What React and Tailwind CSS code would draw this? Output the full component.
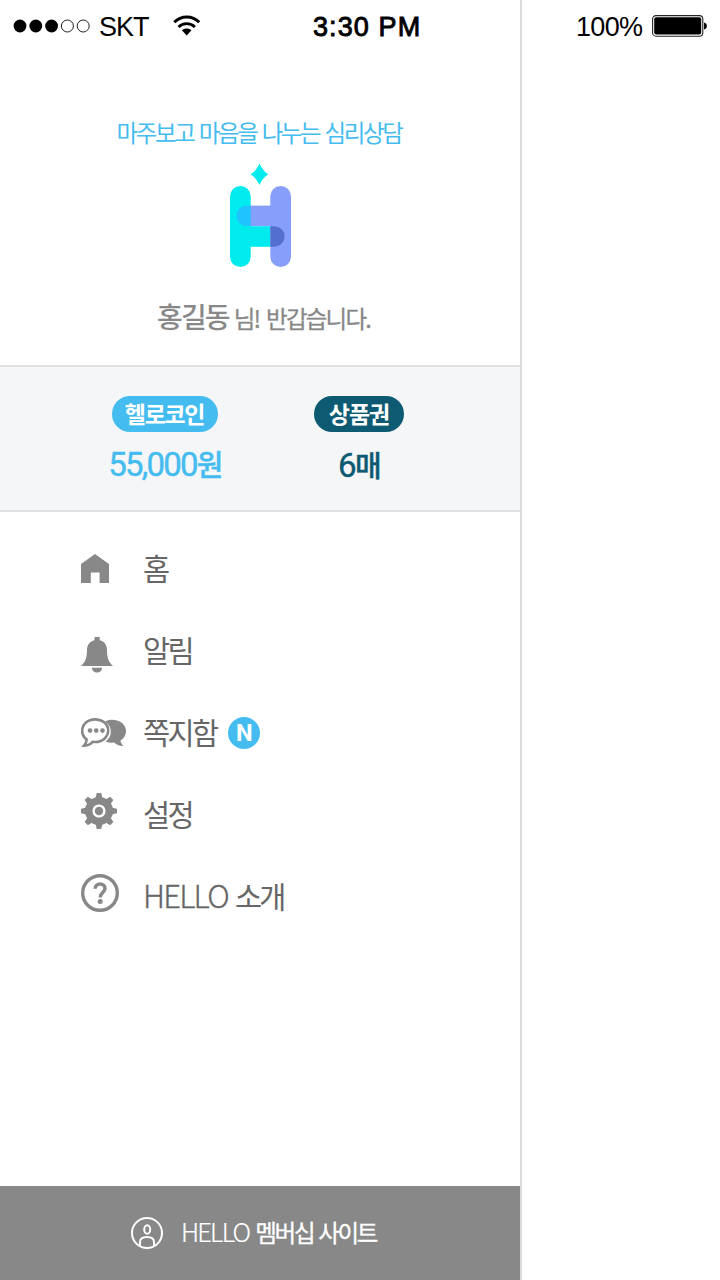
const KR = "font-['Noto_Sans_CJK_KR',sans-serif]";

function SignalDots() {
  return (
    <svg className="h-[14px] w-[78px]" viewBox="0 0 78 14">
      <circle cx="7" cy="7" r="6.4" fill="#000" />
      <circle cx="22.8" cy="7" r="6.4" fill="#000" />
      <circle cx="38.6" cy="7" r="6.4" fill="#000" />
      <circle cx="54.4" cy="7" r="6" fill="none" stroke="#222" strokeWidth="1" />
      <circle cx="70.2" cy="7" r="6" fill="none" stroke="#222" strokeWidth="1" />
    </svg>
  );
}

function Wifi() {
  return (
    <svg className="h-[22px] w-[28px]" viewBox="0 0 28 22" fill="none" stroke="#000">
      <path d="M1.3 7.2C8.2 0.1 19.3 0.1 26.2 7.2" strokeWidth="3" />
      <path d="M5.5 12C10.2 7.5 17.2 7.5 21.9 12" strokeWidth="2.8" />
      <path d="M8.9 15.3C11.8 12.9 15.6 12.9 18.5 15.3L13.7 20.5Z" fill="#000" stroke="none" />
    </svg>
  );
}

function Battery() {
  return (
    <svg className="h-[22px] w-[56px]" viewBox="0 0 56 22">
      <rect x="0.6" y="0.6" width="50.2" height="20.6" rx="3.4" fill="#fff" stroke="#222" strokeWidth="1.1" />
      <rect x="2.2" y="2.2" width="47" height="17.4" rx="2" fill="#000" />
      <path d="M52 7.5C55.8 8 55.8 14 52 14.5Z" fill="#000" />
    </svg>
  );
}

function Logo() {
  return (
    <svg className="h-[104px] w-[62px]" viewBox="0 0 62 104">
      <path d="M29.5 -0.5C31.8 4.5 34.5 8 38.2 10.3C34.5 12.7 31.8 16 29.5 21C27.2 16 24.5 12.7 20.6 10.3C24.5 8 27.2 4.5 29.5 -0.5Z" fill="#00ebee" />
      <rect x="0" y="22" width="20.7" height="81" rx="10.3" fill="#00ebee" />
      <rect x="40.3" y="22" width="20.7" height="81" rx="10.3" fill="#889efb" />
      <rect x="20" y="41.6" width="22" height="20.6" fill="#889efb" />
      <path d="M20.7 41.6H16.8A10.3 10.3 0 0 0 16.8 62.2H20.7Z" fill="#1fc3ff" />
      <rect x="20" y="62.2" width="20.4" height="20.6" fill="#00ebee" />
      <path d="M40.3 62.2H44.3A10.3 10.3 0 0 1 44.3 82.8H40.3Z" fill="#5370d0" />
    </svg>
  );
}

function HomeIcon() {
  return (
    <svg className="relative -top-px h-[29px] w-[28px]" viewBox="0 0 28 29" fill="#888">
      <path d="M14 0L28 10V29H18.6V18.4H9.8V29H0V10Z" />
    </svg>
  );
}

function BellIcon() {
  return (
    <svg className="mt-2 h-[36px] w-[32px]" viewBox="0 0 32 36" fill="#888">
      <path d="M13.5 0H18.7V3.2C23.5 4.4 26 8 26 13C26 20.5 27.5 25 32 28.9H0C4.5 25 6 20.5 6 13C6 8 8.7 4.4 13.5 3.2Z" />
      <path d="M11 30.8H21C21 37.2 11 37.2 11 30.8Z" />
    </svg>
  );
}

function ChatIcon() {
  return (
    <svg className="h-[30px] w-[46px]" viewBox="0 0 46 30">
      <path d="M30 1.8C39 1.4 45 6.5 45 13.2C45 17 43 20.5 39.5 22.5C39.7 24.5 40.8 26.2 42.4 28C38.5 28.2 35.5 26.7 33 24.6C30 24.8 27 24.4 24.5 23.4C31.5 19 32 8 24 3.4C26 2.5 28 1.9 30 1.8Z" fill="#888" />
      <path d="M14.2 1.400C21.5 1.400 27.2 6.2 27.2 12.6C27.2 19 21.5 24 14.2 24C13.2 24 12.4 23.900 11.7 23.8C9.5 26.5 6.5 27.900 3 27.7C5 25.8 5.7 24 5.6 21.4C2.7 19.5 1.2 16.3 1.2 12.6C1.2 6.2 6.8 1.400 14.2 1.400Z" fill="#fff" stroke="#888" strokeWidth="2.6" />
      <circle cx="9" cy="12.6" r="2.3" fill="#888" />
      <circle cx="15.2" cy="12.6" r="2.3" fill="#888" />
      <circle cx="21.5" cy="12.6" r="2.3" fill="#888" />
    </svg>
  );
}

function GearIcon() {
  return (
    <svg className="relative -top-1 h-[36px] w-[36px]" viewBox="-18 -18 36 36" fill="#888">
      <circle r="14" />
      {[0, 45, 90, 135, 180, 225, 270, 315].map((a) => (
        <path key={a} transform={`rotate(${a})`} d="M-2.300 -18H2.300L3.600 -12H-3.600Z" />
      ))}
      <circle r="5.4" fill="none" stroke="#fff" strokeWidth="2.4" />
    </svg>
  );
}

function HelpIcon() {
  return (
    <svg className="relative -top-1 h-[38px] w-[38px]" viewBox="0 0 38 38" fill="none" stroke="#888">
      <circle cx="19" cy="19" r="17.3" strokeWidth="3.4" />
      <path d="M14.2 14.7C14.3 8.4 24 8.3 24 14.5C24 18.6 19.2 18.6 19.2 23.4" strokeWidth="3.5" />
      <circle cx="19.2" cy="27.6" r="2.500" fill="#888" stroke="none" />
    </svg>
  );
}

function MemberIcon() {
  return (
    <svg className="h-[32px] w-[32px]" viewBox="0 0 32 32" fill="none" stroke="#fff" strokeWidth="2">
      <circle cx="16" cy="16" r="15" />
      <ellipse cx="16.2" cy="12.5" rx="3" ry="4.2" />
      <path d="M9 29V25C9 21 11.5 20 16 20C20.5 20 23 21 23 25V29" />
    </svg>
  );
}

const menu = [
  { label: "홈", Icon: HomeIcon },
  { label: "알림", Icon: BellIcon },
  { label: "쪽지함", Icon: ChatIcon, isNew: true },
  { label: "설정", Icon: GearIcon },
  { latin: "HELLO", label: "소개", Icon: HelpIcon },
];

export default function App() {
  return (
    <div className={`flex h-[1280px] w-[720px] overflow-hidden bg-white ${KR}`}>
      <aside className="flex w-[522px] shrink-0 flex-col border-r-2 border-[#dcdcdc]">
        <header className="flex h-[52px] shrink-0 items-center pl-[13px] font-['Liberation_Sans',sans-serif] text-[27px] text-black">
          <SignalDots />
          <span className="ml-[8px] w-[74px] pt-[3px] tracking-[-1px]">SKT</span>
          <Wifi />
          <span className="ml-[112px] whitespace-nowrap pt-[3px] tracking-[1.1px] [-webkit-text-stroke:0.9px_#000]">3:30 PM</span>
        </header>

        <section className="flex h-[313px] shrink-0 flex-col items-center">
          <p className="mt-[62px] h-[36px] whitespace-nowrap pr-[2px] text-[23.5px] leading-[36px] tracking-[-2.4px] [word-spacing:2.4px] text-[#45bcef]">
            마주보고 마음을 나누는 심리상담
          </p>
          <div className="mt-[14px] h-[104px] pl-px">
            <Logo />
          </div>
          <p className="mt-[28px] flex h-[40px] items-baseline whitespace-nowrap pl-[7px] leading-[40px] text-[#888]">
            <b className="mr-[5px] text-[28px] font-medium tracking-[-1.9px]">홍길동</b>
            <span className="text-[23.5px] tracking-[-1.8px] [word-spacing:3.4px] [-webkit-text-stroke:0.3px_#888]">님! 반갑습니다.</span>
          </p>
        </section>

        <section className="flex h-[147px] shrink-0 border-y-2 border-[#e0e0e0] bg-[#f4f6f8]">
          <div className="ml-[92px] flex w-[146px] flex-col items-center pt-[29px]">
            <span className="flex h-[36px] w-[106px] items-center justify-center rounded-full bg-[#45bcef] pr-px pb-[2px] text-[23px] leading-[34px] font-bold tracking-[-1.3px] text-white">
              헬로코인
            </span>
            <strong className="mt-[11px] h-[44px] whitespace-nowrap font-['Roboto','Noto_Sans_CJK_KR',sans-serif] text-[33px] leading-[44px] font-normal tracking-[-1.8px] text-[#45bcef] [-webkit-text-stroke:0.4px_#45bcef]">
              55,000<span className="text-[29px] font-medium">원</span>
            </strong>
          </div>
          <div className="ml-[56px] flex w-[130px] flex-col items-center pt-[29px]">
            <span className="flex h-[36px] w-[90px] items-center justify-center rounded-full bg-[#0e5a72] pb-[2px] text-[23px] leading-[34px] font-bold tracking-[-1px] text-white">
              상품권
            </span>
            <strong className="mt-[12px] h-[44px] whitespace-nowrap font-['Roboto','Noto_Sans_CJK_KR',sans-serif] text-[33px] leading-[44px] font-normal tracking-[-1.5px] text-[#0e5a72] [-webkit-text-stroke:0.4px_#0e5a72]">
              6<span className="text-[29px] font-medium">매</span>
            </strong>
          </div>
        </section>

        <nav className="grow pt-[16px]">
          <ul>
            {menu.map(({ latin, label, Icon, isNew }) => (
              <li key={label} className="flex h-[82px] items-center pl-[81px]">
                <div className="w-[62px] shrink-0">
                  <Icon />
                </div>
                <span className="flex whitespace-nowrap pb-[4px] text-[29.5px] leading-[44px] tracking-[-2.7px] text-[#666]">
                  {latin && (
                    <span className="mr-[7px] text-[31px] font-light tracking-[-1.8px] [-webkit-text-stroke:0.3px_#666]">{latin}</span>
                  )}
                  {label}
                </span>
                {isNew && (
                  <span className="ml-[12px] flex size-8 items-center justify-center rounded-full bg-[#45bcef] font-['Roboto',sans-serif] text-[23.5px] leading-8 font-bold text-white">
                    N
                  </span>
                )}
              </li>
            ))}
          </ul>
        </nav>

        <footer className="flex h-[94px] shrink-0 items-center bg-[#888] pl-[131px] text-white">
          <MemberIcon />
          <span className="ml-[18px] flex items-baseline whitespace-nowrap pb-[3px] leading-[40px]">
            <span className="mr-[6px] text-[25.5px] font-light tracking-[-1.8px] [-webkit-text-stroke:0.2px_#fff]">HELLO</span>
            <span className="text-[23.5px] tracking-[-2.3px] [word-spacing:2px] [-webkit-text-stroke:0.3px_#fff]">멤버십 사이트</span>
          </span>
        </footer>
      </aside>

      <main className="flex h-[52px] grow items-center pl-[53px] font-['Liberation_Sans',sans-serif] text-[27px] text-black">
        <span className="w-[77px] pt-[3px] pl-px tracking-[-0.7px]">100%</span>
        <Battery />
      </main>
    </div>
  );
}
